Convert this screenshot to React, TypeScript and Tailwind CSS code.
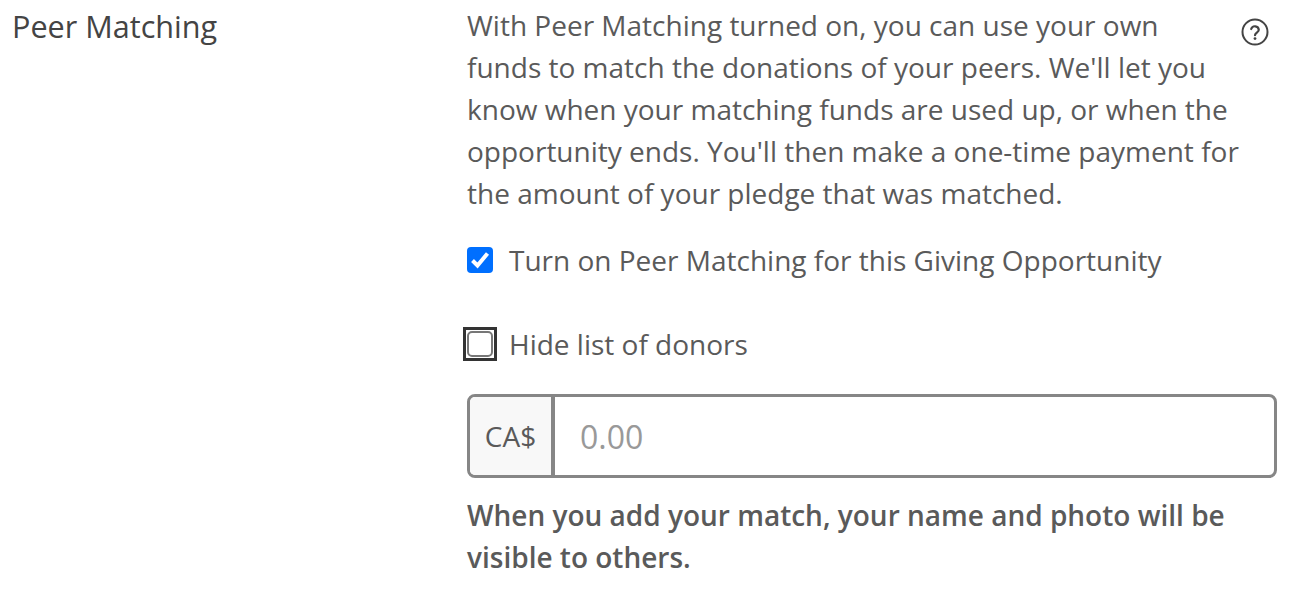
export default function App() {
  return (
    <div className="flex w-[1304px] h-[596px] bg-white text-[#5a5a5a] font-['Open_Sans',sans-serif] overflow-hidden">
      <div className="w-[467px] shrink-0 pl-3 pt-[5px] text-[30.6px] leading-[42px] text-[#444]">Peer Matching</div>
      <div className="w-[810px] shrink-0 pt-[4px] text-[28px]">
        <div className="flex justify-between">
          <p className="w-[773px] shrink-0 leading-[42px]">
            With Peer Matching turned on, you can use your own funds to match the donations of your peers. We'll let you know when your matching funds are used up, or when the opportunity ends. You'll then make a one-time payment for the amount of your pledge that was matched.
          </p>
          <svg viewBox="0 0 28 28" fill="none" className="w-7 h-7 mt-[14px] ml-[-6px] mr-2 text-[#444]">
            <circle cx="14" cy="14" r="12.5" stroke="currentColor" strokeWidth="2" />
            <path d="M10.2 11a3.9 3.9 0 0 1 7.6 .8c0 2.6-3.8 3-3.8 5.4" stroke="currentColor" strokeWidth="2.2" strokeLinecap="round" />
            <circle cx="14" cy="20.6" r="1.4" fill="currentColor" />
          </svg>
        </div>
        <label className="flex items-center mt-[25px] h-[42px]">
          <span className="flex items-center justify-center w-[26px] h-[26px] rounded-[4px] bg-[#006fff]">
            <svg viewBox="0 0 26 26" fill="none" className="w-[26px] h-[26px]">
              <path d="M5.5 13.5l5 5 10-12" stroke="white" strokeWidth="4" />
            </svg>
          </span>
          <span className="ml-4">Turn on Peer Matching for this Giving Opportunity</span>
        </label>
        <label className="flex items-center mt-[42px] h-[42px]">
          <span className="flex items-center justify-center w-[34px] h-[34px] -mx-1 border-[3px] border-[#333] shrink-0">
            <span className="w-[26px] h-[26px] rounded-[5px] border-2 border-[#777] bg-white"></span>
          </span>
          <span className="ml-4">Hide list of donors</span>
        </label>
        <div className="flex w-[810px] h-[84px] mt-[29px] border-[3px] border-[#868686] rounded-[8px] overflow-hidden">
          <div className="flex items-center justify-center w-[85px] shrink-0 bg-[#f8f8f8] border-r-[4px] border-[#868686]">CA$</div>
          <div className="flex items-center pl-[25px] pt-[1px] text-[#999] text-[32px]">0.00</div>
        </div>
        <p className="mt-[16px] font-semibold leading-[42px] w-[790px]">When you add your match, your name and photo will be visible to others.</p>
      </div>
    </div>
  );
}
